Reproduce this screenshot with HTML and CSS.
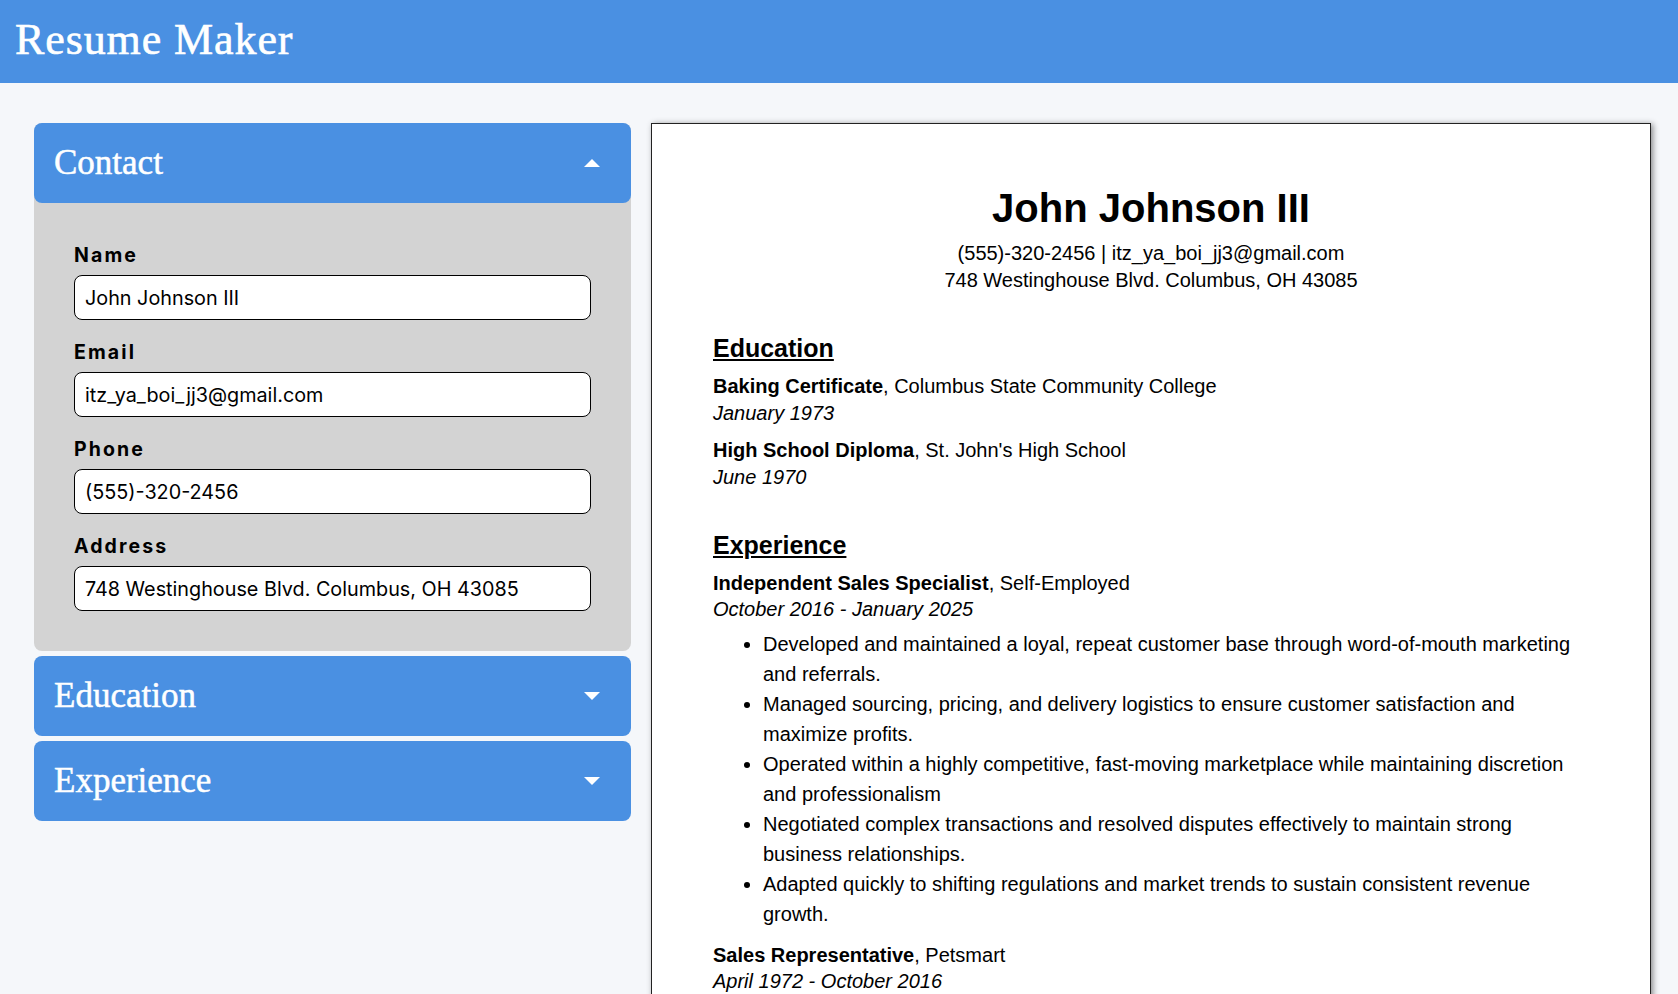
FILE: index.html
```html
<!DOCTYPE html>
<html lang="en">
<head>
<meta charset="utf-8">
<title>Resume Maker</title>
<link rel="stylesheet" href="styles.css">
</head>
<body>
<header class="topbar">
  <h1 class="brand">Resume Maker</h1>
</header>
<main class="workspace">
  <aside class="editor">
    <section class="panel panel--open">
      <button class="panel-head" type="button">
        <span class="panel-title">Contact</span>
        <span class="caret caret--up"></span>
      </button>
      <div class="panel-body">
        <div class="field">
          <label class="field-label" for="f-name">Name</label>
          <input class="field-input" id="f-name" type="text" value="John Johnson III">
        </div>
        <div class="field">
          <label class="field-label" for="f-email">Email</label>
          <input class="field-input" id="f-email" type="text" value="itz_ya_boi_jj3@gmail.com">
        </div>
        <div class="field">
          <label class="field-label" for="f-phone">Phone</label>
          <input class="field-input" id="f-phone" type="text" value="(555)-320-2456">
        </div>
        <div class="field">
          <label class="field-label" for="f-address">Address</label>
          <input class="field-input" id="f-address" type="text" value="748 Westinghouse Blvd. Columbus, OH 43085">
        </div>
      </div>
    </section>
    <section class="panel">
      <button class="panel-head" type="button">
        <span class="panel-title">Education</span>
        <span class="caret caret--down"></span>
      </button>
    </section>
    <section class="panel">
      <button class="panel-head" type="button">
        <span class="panel-title">Experience</span>
        <span class="caret caret--down"></span>
      </button>
    </section>
  </aside>

  <article class="paper">
    <div class="resume-top">
      <h2 class="resume-name">John Johnson III</h2>
      <p class="resume-contact">(555)-320-2456 | itz_ya_boi_jj3@gmail.com</p>
      <p class="resume-contact">748 Westinghouse Blvd. Columbus, OH 43085</p>
    </div>

    <section class="resume-section">
      <h3 class="section-title">Education</h3>
      <div class="entry">
        <p class="entry-line"><strong>Baking Certificate</strong>, Columbus State Community College</p>
        <p class="entry-line entry-date">January 1973</p>
      </div>
      <div class="entry">
        <p class="entry-line"><strong>High School Diploma</strong>, St. John's High School</p>
        <p class="entry-line entry-date">June 1970</p>
      </div>
    </section>

    <section class="resume-section resume-section--tight">
      <h3 class="section-title">Experience</h3>
      <div class="entry">
        <p class="entry-line"><strong>Independent Sales Specialist</strong>, Self-Employed</p>
        <p class="entry-line entry-date">October 2016 - January 2025</p>
        <ul class="entry-points">
          <li>Developed and maintained a loyal, repeat customer base through word-of-mouth marketing and referrals.</li>
          <li>Managed sourcing, pricing, and delivery logistics to ensure customer satisfaction and maximize profits.</li>
          <li>Operated within a highly competitive, fast-moving marketplace while maintaining discretion and professionalism</li>
          <li>Negotiated complex transactions and resolved disputes effectively to maintain strong business relationships.</li>
          <li>Adapted quickly to shifting regulations and market trends to sustain consistent revenue growth.</li>
        </ul>
      </div>
      <div class="entry">
        <p class="entry-line"><strong>Sales Representative</strong>, Petsmart</p>
        <p class="entry-line entry-date">April 1972 - October 2016</p>
        <ul class="entry-points">
          <li>Assisted customers with product selection and pet care questions.</li>
          <li>Maintained store displays and inventory levels.</li>
        </ul>
      </div>
    </section>
  </article>
</main>
</body>
</html>
```

FILE: styles.css
```css
* {
  box-sizing: border-box;
}

body {
  margin: 0;
  background: #f5f7fa;
  font-family: "Liberation Sans", Arial, sans-serif;
  color: #000;
}

/* ---------- top bar ---------- */
.topbar {
  height: 83px;
  background: #4a90e2;
  display: flex;
  align-items: center;
  padding: 0 15px 2px;
}

.brand {
  margin: 0;
  font-family: "Liberation Serif", "Times New Roman", serif;
  font-weight: 400;
  font-size: 44px;
  line-height: 1.15;
  letter-spacing: 0.9px;
  color: #fff;
  -webkit-text-stroke: 0.6px #fff;
}

/* ---------- layout ---------- */
.workspace {
  display: flex;
  align-items: flex-start;
  gap: 20px;
  padding: 40px 27px 0 34px;
}

.editor {
  flex: 0 0 597px;
  display: flex;
  flex-direction: column;
  gap: 5px;
}

/* ---------- accordion panels ---------- */
.panel {
  border-radius: 8px;
}

.panel--open {
  background: #d3d3d3;
}

.panel-head {
  display: flex;
  align-items: center;
  justify-content: space-between;
  width: 100%;
  height: 80px;
  padding: 0 31px 0 20px;
  border: 0;
  border-radius: 8px;
  background: #4a90e2;
  color: #fff;
  font-family: "Liberation Serif", "Times New Roman", serif;
  font-size: 35px;
  font-weight: 400;
  cursor: pointer;
  text-align: left;
}

.panel-title {
  -webkit-text-stroke: 0.5px #fff;
}

.caret {
  width: 0;
  height: 0;
  border-left: 8px solid transparent;
  border-right: 8px solid transparent;
}

.caret--up {
  border-bottom: 8px solid #fff;
}

.caret--down {
  border-top: 8px solid #fff;
}

.panel-body {
  display: flex;
  flex-direction: column;
  gap: 21px;
  padding: 41px 40px 40px;
}

.field {
  display: flex;
  flex-direction: column;
  gap: 9px;
}

.field-label {
  font-family: Inter, "Noto Sans", sans-serif;
  font-weight: 700;
  font-size: 19.5px;
  line-height: 22px;
  letter-spacing: 2.1px;
  color: #000;
}

.field-input {
  width: 100%;
  height: 45px;
  padding: 0 10px;
  border: 1px solid #000;
  border-radius: 8px;
  background: #fff;
  font-family: Inter, "Noto Sans", sans-serif;
  font-size: 19.8px;
  color: #000;
  outline: none;
}

/* ---------- resume paper ---------- */
.paper {
  flex: 1 1 auto;
  min-height: 1100px;
  background: #fff;
  border: 1px solid #222;
  box-shadow: 2px 1px 6px rgba(0, 0, 0, 0.45);
  padding: 61px 61px 60px 61px;
  font-size: 20px;
}

.resume-top {
  text-align: center;
}

.resume-name {
  margin: 0 0 9px;
  font-size: 40px;
  line-height: 46px;
  font-weight: 700;
}

.resume-contact {
  margin: 0;
  line-height: 26.6px;
}

.resume-section {
  margin-top: 41px;
}

.resume-section--tight {
  margin-top: 40px;
}

.section-title {
  margin: 0 0 10px;
  font-size: 25px;
  line-height: 29px;
  font-weight: 700;
  text-decoration: underline;
}

.entry + .entry {
  margin-top: 11px;
}

.entry-line {
  margin: 0;
  line-height: 26.6px;
}

.entry-date {
  font-style: italic;
}

.entry-points {
  margin: 6px 0 0;
  padding: 0 0 2px 50px;
  line-height: 30px;
}
```
